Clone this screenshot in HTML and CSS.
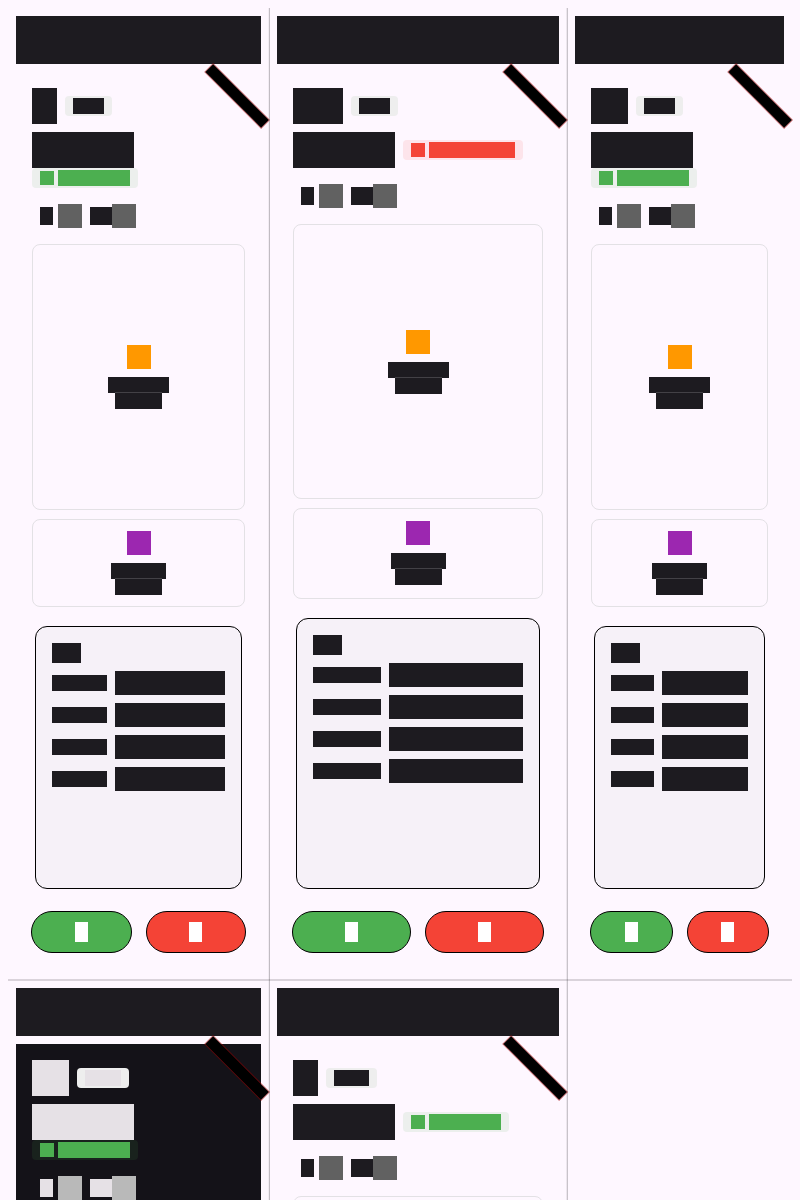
FILE: index.html
```
<!DOCTYPE html>
<html lang="en">
<head>
<meta charset="utf-8">
<title>Scenarios</title>
<link rel="stylesheet" href="styles.css">
</head>
<body>
<svg width="0" height="0" class="defs"><defs><g id="strip"><path d="M8.1 0 64.1 56 56.1 64 .1 8Z" fill="none" stroke="#a00000" stroke-opacity=".55" stroke-width="1.3"/><path d="M8.1 .3 63.8 56 56.1 63.7 .4 8Z"/></g></defs></svg>
<main class="grid">
  <section class="cell">
    <div class="caption"></div>
    <svg class="ribbon"><use href="#strip"/></svg>
    <div class="panel">
      <div class="row"><i class="count n1"></i><span class="chip"><i class="w31"></i></span></div>
      <div class="row title"><i class="name"></i><span class="status ok"><i class="icon"></i><i class="bar"></i></span></div>
      <div class="stats"><i class="digit"></i><i class="sq"></i><i class="word"></i><i class="sq"></i></div>
      <div class="card big"><i class="sq orange"></i><i class="line l1"></i><i class="line l2"></i></div>
      <div class="card small"><i class="sq purple"></i><i class="line l3"></i><i class="line l2"></i></div>
      <div class="details"><i class="heading"></i>
        <div class="pair"><i></i><b></b></div><div class="pair"><i></i><b></b></div><div class="pair"><i></i><b></b></div><div class="pair"><i></i><b></b></div>
      </div>
      <div class="actions"><button class="yes"><i></i></button><button class="no"><i></i></button></div>
    </div>
  </section>
  <section class="cell wide">
    <div class="caption"></div>
    <svg class="ribbon"><use href="#strip"/></svg>
    <div class="panel">
      <div class="row"><i class="count n3"></i><span class="chip"><i class="w31"></i></span></div>
      <div class="row title"><i class="name"></i><span class="status bad"><i class="icon"></i><i class="bar"></i></span></div>
      <div class="stats"><i class="digit"></i><i class="sq"></i><i class="word"></i><i class="sq"></i></div>
      <div class="card big"><i class="sq orange"></i><i class="line l1"></i><i class="line l2"></i></div>
      <div class="card small"><i class="sq purple"></i><i class="line l3"></i><i class="line l2"></i></div>
      <div class="details"><i class="heading"></i>
        <div class="pair"><i></i><b></b></div><div class="pair"><i></i><b></b></div><div class="pair"><i></i><b></b></div><div class="pair"><i></i><b></b></div>
      </div>
      <div class="actions"><button class="yes"><i></i></button><button class="no"><i></i></button></div>
    </div>
  </section>
  <section class="cell">
    <div class="caption"></div>
    <svg class="ribbon"><use href="#strip"/></svg>
    <div class="panel">
      <div class="row"><i class="count n2"></i><span class="chip"><i class="w31"></i></span></div>
      <div class="row title"><i class="name"></i><span class="status ok"><i class="icon"></i><i class="bar"></i></span></div>
      <div class="stats"><i class="digit"></i><i class="sq"></i><i class="word"></i><i class="sq"></i></div>
      <div class="card big"><i class="sq orange"></i><i class="line l1"></i><i class="line l2"></i></div>
      <div class="card small"><i class="sq purple"></i><i class="line l3"></i><i class="line l2"></i></div>
      <div class="details"><i class="heading"></i>
        <div class="pair"><i></i><b></b></div><div class="pair"><i></i><b></b></div><div class="pair"><i></i><b></b></div><div class="pair"><i></i><b></b></div>
      </div>
      <div class="actions"><button class="yes"><i></i></button><button class="no"><i></i></button></div>
    </div>
  </section>
  <section class="cell">
    <div class="caption"></div>
    <svg class="ribbon"><use href="#strip"/></svg>
    <div class="panel dark">
      <div class="row"><i class="count n2"></i><span class="chip"><i class="w36"></i></span></div>
      <div class="row title"><i class="name"></i><span class="status ok"><i class="icon"></i><i class="bar"></i></span></div>
      <div class="stats"><i class="digit"></i><i class="sq"></i><i class="word"></i><i class="sq"></i></div>
    </div>
  </section>
  <section class="cell wide">
    <div class="caption"></div>
    <svg class="ribbon"><use href="#strip"/></svg>
    <div class="panel">
      <div class="row"><i class="count n1"></i><span class="chip"><i class="w35"></i></span></div>
      <div class="row title"><i class="name"></i><span class="status ok"><i class="icon"></i><i class="bar"></i></span></div>
      <div class="stats"><i class="digit"></i><i class="sq"></i><i class="word"></i><i class="sq"></i></div>
      <div class="card big"><i class="sq orange"></i><i class="line l1"></i><i class="line l2"></i></div>
    </div>
  </section>
  <div class="rule-h"></div>
  <div class="rule-v first"></div>
  <div class="rule-v second"></div>
</main>
</body>
</html>
```
FILE: styles.css
```
* { box-sizing: border-box; }
html, body { margin: 0; height: 1200px; overflow: hidden; background: #fef7ff; }
i, b { display: block; flex: none; background: var(--ink); }
.defs { position: absolute; }

.grid {
  --ink: #1d1b20;
  --muted: #616161;
  position: relative;
  display: grid;
  grid-template-columns: 261.3px 298px 224.7px;
  grid-template-rows: 972px 220px;
  height: 1200px;
  padding: 8px 8px 0;
}
.cell { position: relative; padding: 8px; min-width: 0; }
.caption { height: 48px; background: var(--ink); }
.ribbon { position: absolute; top: 56px; right: 0; width: 64.3px; height: 64px; overflow: visible; z-index: 1; }
.panel { display: flex; flex-direction: column; height: 900px; margin-top: 8px; padding: 16px; }
.cell:nth-child(n+4) .panel { height: 156px; overflow: hidden; }
.cell:nth-child(n+4) .panel > * { flex-shrink: 0; }
.dark { --ink: #e6e1e6; --muted: #b9b9b9; background: #141218; }

.row { display: flex; flex-wrap: wrap; align-items: center; column-gap: 8px; }
.title { margin-top: 8px; }
.count { height: 36px; }
.n1 { width: 25px; }
.n2 { width: 37.1px; }
.n3 { width: 49.8px; }
.name { width: 102px; height: 36px; }
.chip { display: flex; padding: 2px 8px; border-radius: 4px; background: #eee; }
.chip i { height: 16px; }
.w31 { width: 31px; }
.w35 { width: 34.8px; }
.w36 { width: 36px; }
.status { display: flex; align-items: center; gap: 4px; height: 20px; padding: 0 8px; border-radius: 4px; }
.status i { background: var(--tone); }
.status .icon { width: 14px; height: 14px; }
.status .bar { width: 71.7px; height: 16px; }
.ok { --tone: #4caf50; background: rgba(76, 175, 80, .1); }
.bad { --tone: #f44336; background: rgba(244, 67, 54, .1); }
.bad .bar { width: 86px; }

.stats { display: flex; align-items: center; margin: 16px 0; padding-left: 8px; }
.digit { width: 12.6px; height: 18px; margin-right: 5px; }
.word { width: 22px; height: 18px; margin-left: 8px; }
.sq { width: 24px; height: 24px; background: var(--muted); }

.card {
  display: flex;
  flex-direction: column;
  align-items: center;
  justify-content: center;
  flex: none;
  border: 1px solid #e3e1e5;
  border-radius: 8px;
}
.big { height: 266.2px; }
.small { height: 88px; margin-top: 8.4px; }
.wide .big { height: 275.2px; }
.wide .small { height: 91px; }
.card .sq { margin-bottom: 8px; }
.orange { background: #ff9800; }
.purple { background: #9c27b0; }
.line { height: 16px; }
.line + .line { box-shadow: 0 -1px #434146; }
.l1 { width: 61px; }
.l2 { width: 46.7px; }
.l3 { width: 55.4px; }

.details {
  flex: 1;
  margin: 19.6px 3px 22px;
  padding: 16px;
  border: 1px solid #000;
  border-radius: 12px;
  background: #f6f1f8;
}
.heading { width: 29px; height: 20px; }
.pair { display: grid; grid-template-columns: 1fr 2fr; column-gap: 8px; align-items: center; margin-top: 8px; }
.pair i { height: 16px; }
.pair b { height: 24px; }

.actions { display: flex; gap: 14px; margin: 0 -1px 3px; }
.actions button {
  display: flex;
  align-items: center;
  justify-content: center;
  flex: 1;
  height: 42px;
  padding: 0;
  border: 1px solid #000;
  border-radius: 21px;
}
.yes { background: #4caf50; }
.no { background: #f44336; }
.actions i { width: 13px; height: 20px; background: #fff; }

/* Separators lie over the cell edges */
.rule-h { position: absolute; left: 8px; right: 8px; top: 979px; height: 2px; background: rgba(29, 27, 32, .16); }
.rule-v { position: absolute; top: 8px; bottom: 0; width: 2px; }
.first { left: 268px; background: linear-gradient(90deg, rgba(29, 27, 32, .05) 50%, rgba(29, 27, 32, .27) 50%); }
.second { left: 566px; background: linear-gradient(90deg, rgba(29, 27, 32, .08) 50%, rgba(29, 27, 32, .24) 50%); }
```
